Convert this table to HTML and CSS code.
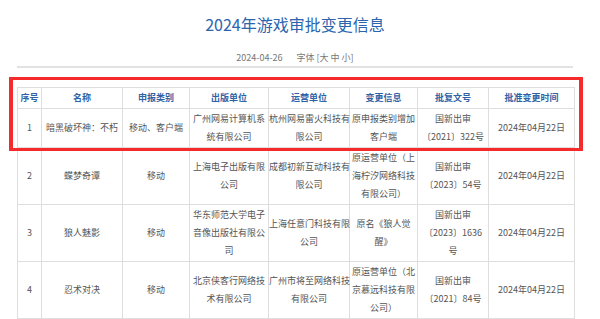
FILE: index.html
```html
<!DOCTYPE html>
<html lang="zh">
<head>
<meta charset="utf-8">
<link rel="stylesheet" href="styles.css">
</head>
<body>
<div class="page">
  <h1 class="title">2024年游戏审批变更信息</h1>
  <div class="meta"><span class="date">2024-04-26</span><span class="fontsize">字体 [大 中 小]</span></div>
  <div class="tablewrap">
    <table class="list">
      <colgroup>
        <col class="c1"><col class="c2"><col class="c3"><col class="c4"><col class="c5"><col class="c6"><col class="c7"><col class="c8">
      </colgroup>
      <thead>
        <tr><th>序号</th><th>名称</th><th>申报类别</th><th>出版单位</th><th>运营单位</th><th>变更信息</th><th>批复文号</th><th>批准变更时间</th></tr>
      </thead>
      <tbody>
        <tr><td>1</td><td>暗黑破坏神：不朽</td><td>移动、客户端</td><td>广州网易计算机系<br>统有限公司</td><td>杭州网易雷火科技有<br>限公司</td><td>原申报类别增加<br>客户端</td><td>国新出审<br>〔2021〕322号</td><td>2024年04月22日</td></tr>
        <tr><td>2</td><td>蝶梦奇谭</td><td>移动</td><td>上海电子出版有限<br>公司</td><td>成都初新互动科技有<br>限公司</td><td>原运营单位（上<br>海柠汐网络科技<br>有限公司）</td><td>国新出审<br>〔2023〕54号</td><td>2024年04月22日</td></tr>
        <tr><td>3</td><td>狼人魅影</td><td>移动</td><td>华东师范大学电子<br>音像出版社有限公<br>司</td><td>上海任意门科技有限<br>公司</td><td>原名《狼人觉<br>醒》</td><td>国新出审<br>〔2023〕1636<br>号</td><td>2024年04月22日</td></tr>
        <tr><td>4</td><td>忍术对决</td><td>移动</td><td>北京侠客行网络技<br>术有限公司</td><td>广州市将至网络科技<br>有限公司</td><td>原运营单位（北<br>京慕远科技有限<br>公司）</td><td>国新出审<br>〔2021〕84号</td><td>2024年04月22日</td></tr>
      </tbody>
    </table>
    <div class="highlight"></div>
  </div>
</div>
</body>
</html>
```
FILE: styles.css
```css
html, body {
  margin: 0;
  padding: 0;
  background: #fff;
}
body {
  font-family: "Noto Sans CJK SC", "Noto Sans", sans-serif;
  width: 600px;
  height: 319px;
  overflow: hidden;
}
.page {
  margin-left: 17px;
  width: 556px;
  padding-top: 12px;
}
.title {
  margin: 0;
  font-size: 16px;
  line-height: 24px;
  font-weight: normal;
  color: #2c65ae;
  text-align: center;
}
.meta {
  margin-top: 14px;
  font-size: 9px;
  line-height: 16px;
  color: #777;
  text-align: center;
  border-bottom: 2px solid #e2e2e2;
}
.fontsize {
  margin-left: 14px;
}
.tablewrap {
  position: relative;
  margin-top: 19px;
}
.list {
  border-collapse: collapse;
  table-layout: fixed;
  width: 557px;
  font-size: 9px;
  line-height: 18px;
  color: #555;
}
.c1 { width: 24px; }
.c2 { width: 81px; }
.c3 { width: 67px; }
.c4 { width: 79px; }
.c5 { width: 81px; }
.c6 { width: 68px; }
.c7 { width: 71px; }
.c8 { width: 86px; }
.list th, .list td {
  border: 1px solid #dedede;
  padding: 1px 0;
  text-align: center;
  vertical-align: middle;
  white-space: nowrap;
  overflow: visible;
}
.list th {
  color: #2f62a5;
  font-weight: bold;
}
.highlight {
  position: absolute;
  left: -8px;
  top: -10px;
  width: 566px;
  height: 68px;
  border-style: solid;
  border-color: #f52a2a;
  border-width: 3px 4px;
}
```
